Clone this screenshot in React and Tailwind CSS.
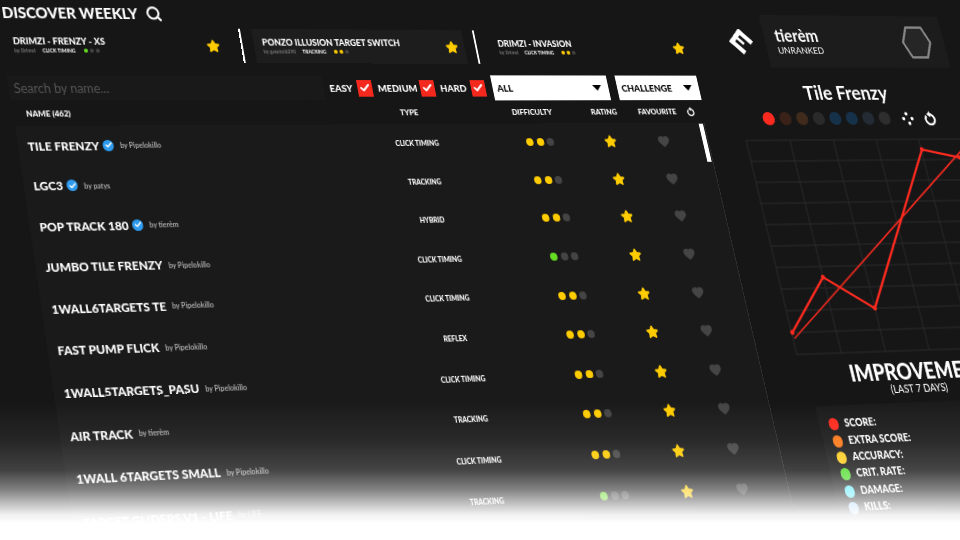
import React from 'react';
import { Search, Check, Star, Heart } from 'lucide-react';

const GOLD = 'bg-[#ffcc00]';
const GREEN = 'bg-[#66dd22]';
const OFF = 'bg-[#444444]';

const WEEKLY = [
  { title: 'DRIMZI - FRENZY - XS', by: 'by Drimzi', type: 'CLICK TIMING', level: 1, box: 'pl-[7px] pr-[10px]' },
  { title: 'PONZO ILLUSION TARGET SWITCH', by: 'by gasutol6290', type: 'TRACKING', level: 2, box: 'pl-[9px] pr-[7px] bg-[#1d1d1d]' },
  { title: 'DRIMZI - INVASION', by: 'by Drimzi', type: 'CLICK TIMING', level: 2, box: 'pl-[12px] pr-[2px]' },
];

const SCENARIOS = [
  { name: 'TILE FRENZY', verified: true, by: 'Pipelokillo', type: 'CLICK TIMING', level: 2 },
  { name: 'LGC3', verified: true, by: 'patys', type: 'TRACKING', level: 2 },
  { name: 'POP TRACK 180', verified: true, by: 'tierèm', type: 'HYBRID', level: 2 },
  { name: 'JUMBO TILE FRENZY', by: 'Pipelokillo', type: 'CLICK TIMING', level: 1 },
  { name: '1WALL6TARGETS TE', by: 'Pipelokillo', type: 'CLICK TIMING', level: 2 },
  { name: 'FAST PUMP FLICK', by: 'Pipelokillo', type: 'REFLEX', level: 2 },
  { name: '1WALL5TARGETS_PASU', by: 'Pipelokillo', type: 'CLICK TIMING', level: 2 },
  { name: 'AIR TRACK', by: 'tierèm', type: 'TRACKING', level: 2 },
  { name: '1WALL 6TARGETS SMALL', by: 'Pipelokillo', type: 'CLICK TIMING', level: 2 },
  { name: 'TARGET GLIDERS V1 - LIFE', by: 'LIFE', type: 'TRACKING', level: 1 },
];

const SWATCHES = ['bg-[#ff2a1f]', 'bg-[#3a2218]', 'bg-[#3f2a1c]', 'bg-[#2a2a2a]', 'bg-[#16314a]', 'bg-[#16314a]', 'bg-[#252b35]', 'bg-[#2e2e2e]'];

const STATS = [
  { label: 'SCORE:', color: 'bg-[#ff2a1f]' },
  { label: 'EXTRA SCORE:', color: 'bg-[#ff7a1a]' },
  { label: 'ACCURACY:', color: 'bg-[#ffcc22]' },
  { label: 'CRIT. RATE:', color: 'bg-[#55dd33]' },
  { label: 'DAMAGE:', color: 'bg-[#66eeff]' },
  { label: 'KILLS:', color: 'bg-[#99ccff]' },
];

function Dots({ level, size = 'w-[8px] h-[8px]', gap = 'gap-[3.5px]' }) {
  const on = level === 1 ? GREEN : GOLD;
  return (
    <div className={`flex items-center ${gap}`}>
      {[0, 1, 2].map((i) => (
        <span key={i} className={`rounded-full ${size} ${i < level ? on : OFF}`} />
      ))}
    </div>
  );
}

function RedCheck() {
  return (
    <span className="flex items-center justify-center w-[16px] h-[17px] bg-[#f5281d]">
      <Check className="w-[12px] h-[12px] text-white" strokeWidth={4} />
    </span>
  );
}

function Dropdown({ label, width }) {
  return (
    <div className={`flex items-center justify-between h-[26px] bg-white pl-[5px] pr-[8px] ${width}`}>
      <span className="text-[10px] font-black text-black">{label}</span>
      <span className="w-0 h-0 border-x-[5px] border-x-transparent border-t-[6px] border-t-black" />
    </div>
  );
}

function Verified() {
  return (
    <span className="flex items-center justify-center w-[11px] h-[11px] rounded-full bg-[#2e9bf0]">
      <Check className="w-[8px] h-[8px] text-white" strokeWidth={4} />
    </span>
  );
}

function ScenarioRow({ row }) {
  return (
    <div className="grid grid-cols-[362.5px_80px_168px_61px_14px] items-center h-[38.6px]">
      <div className="flex items-center">
        <span className="text-[11.7px] font-black text-white whitespace-nowrap">{row.name}</span>
        {row.verified && <span className="ml-[4px]"><Verified /></span>}
        <span className="ml-[6px] text-[7px] font-bold text-[#a8a8a8] whitespace-nowrap">by {row.by}</span>
      </div>
      <span className="text-center text-[7px] font-black text-white whitespace-nowrap">{row.type}</span>
      <div className="pl-[80px]"><Dots level={row.level} /></div>
      <Star className="w-[14px] h-[14px] fill-[#ffcc00] text-[#ffcc00]" />
      <Heart className="w-[14px] h-[14px] fill-[#454545] text-[#454545]" />
    </div>
  );
}

function Logo() {
  return (
    <svg viewBox="0 0 28 28" className="w-[28px] h-[28px]" fill="#ffffff">
      <g transform="rotate(45 14 14)">
        <rect x="4" y="4" width="5" height="20" />
        <rect x="4" y="4" width="20" height="5" />
        <rect x="4" y="19" width="20" height="5" />
        <rect x="4" y="12.5" width="14" height="3" />
      </g>
    </svg>
  );
}

function Scatter() {
  return (
    <svg viewBox="0 0 16 16" className="w-[15px] h-[15px]" fill="#ffffff">
      <circle cx="7" cy="2.5" r="2" />
      <circle cx="2.5" cy="8" r="2" />
      <circle cx="13.5" cy="8" r="2" />
      <circle cx="9" cy="13.5" r="2" />
    </svg>
  );
}

function Refresh({ className }) {
  return (
    <svg viewBox="0 0 16 16" className={className} fill="none">
      <path d="M4.1 5.6 A5.5 5.5 0 1 0 8 4" stroke="#ffffff" strokeWidth="2.4" />
      <path d="M9 0.4 L9 7.6 L4.6 4 Z" fill="#ffffff" />
    </svg>
  );
}

function Chart() {
  const cols = [0, 52, 104, 156, 208, 260, 312];
  const rows = [0, 22, 44, 66, 88, 110, 132, 154, 176, 198, 220];
  return (
    <svg viewBox="0 0 312 220" className="w-[312px] h-[220px] overflow-visible" fill="none">
      {cols.map((x) => <line key={x} x1={x} y1="0" x2={x} y2="220" stroke="#2b2b2b" strokeWidth="1" />)}
      {rows.map((y) => <line key={y} x1="0" y1={y} x2="312" y2={y} stroke="#2b2b2b" strokeWidth="1" />)}
      <path d="M2 204 L312 -28.5" stroke="#ff2a1f" strokeWidth="1.5" />
      <path d="M1 198 L52 143 L104 176 L209 11 L253 20 L312 32" stroke="#ff2a1f" strokeWidth="2.4" />
      {[[1, 198], [52, 143], [104, 176], [209, 11], [253, 20]].map(([x, y]) => (
        <circle key={x} cx={x} cy={y} r="2.4" fill="#ff2a1f" />
      ))}
    </svg>
  );
}

export default function App() {
  return (
    <div className="relative w-[960px] h-[540px] overflow-hidden bg-[#161616] font-['Lato','Liberation_Sans',sans-serif]">
      {/* whole game menu sits on one tilted plane */}
      <div className="flex w-[1320px] h-[620px] origin-top-left [transform:matrix3d(1,0.01024,0,0.000119,0.1451,1,0,-0.000128,0,0,1,0,0,0,0,1)]">
        <div className="flex flex-col w-[781px] shrink-0">
          <div className="flex items-center h-[24px]">
            <span className="text-[15px] font-black text-white whitespace-nowrap">DISCOVER WEEKLY</span>
            <Search className="ml-[8px] w-[17px] h-[17px] text-white" strokeWidth={3} />
          </div>

          <div className="flex items-center h-[35px] mt-[3px] w-[740px]">
            {WEEKLY.map((card, i) => (
              <React.Fragment key={card.title}>
                {i > 0 && <span className="w-[2px] h-[35px] mx-[12px] bg-white shrink-0" />}
                <div className={`flex items-center justify-between w-[228px] h-[35px] shrink-0 ${card.box}`}>
                  <div className="flex flex-col">
                    <span className="text-[9px] font-black leading-[11px] text-white whitespace-nowrap">{card.title}</span>
                    <div className="flex items-center text-[5px] font-bold leading-[8px] whitespace-nowrap">
                      <span className="text-[#777777]">{card.by}</span>
                      <span className="ml-[7px] text-white">{card.type}</span>
                      <span className="ml-[8px]"><Dots level={card.level} size="w-[4.5px] h-[4.5px]" gap="gap-[1.5px]" /></span>
                    </div>
                  </div>
                  <Star className="w-[14px] h-[14px] fill-[#ffcc00] text-[#ffcc00]" />
                </div>
              </React.Fragment>
            ))}
          </div>

          <div className="flex items-center h-[26px] mt-[12px] -ml-[4px] w-[745px]">
            <div className="flex items-center w-[323px] h-[24px] pl-[5px] pt-[2px] bg-[#191919]">
              <span className="text-[12.5px] text-[#555555]">Search by name...</span>
            </div>
            <span className="ml-[7px] w-[27px] text-[10px] font-black text-white">EASY</span>
            <span className="ml-[3px]"><RedCheck /></span>
            <span className="ml-[6px] w-[41px] text-[10px] font-black text-white">MEDIUM</span>
            <span className="ml-[5px]"><RedCheck /></span>
            <span className="ml-[6px] w-[28px] text-[10px] font-black text-white">HARD</span>
            <span className="ml-[6px]"><RedCheck /></span>
            <span className="ml-[8px]"><Dropdown label="ALL" width="w-[131px]" /></span>
            <span className="ml-[10px]"><Dropdown label="CHALLENGE" width="w-[95px]" /></span>
          </div>

          <div className="flex items-center h-[24px] pl-[9.5px] text-[8px] font-black text-white whitespace-nowrap">
            <span className="w-[387.5px]">NAME (462)</span>
            <span className="w-[123px]">TYPE</span>
            <span className="w-[89px]">DIFFICULTY</span>
            <span className="w-[54px]">RATING</span>
            <span className="w-[56px]">FAVOURITE</span>
            <Refresh className="w-[10px] h-[10px]" />
          </div>

          <div className="relative flex flex-col -ml-[3px] w-[740px] pl-[9.5px] bg-[#1a1a1a] border-r border-r-[#2e2e2e]">
            {SCENARIOS.map((row) => <ScenarioRow key={row.name} row={row} />)}
            <span className="absolute top-[1px] right-[1px] w-[5px] h-[40px] bg-white" />
          </div>
        </div>

        <div className="flex flex-col w-[520px] shrink-0">
          <div className="flex items-center h-[57px] mt-[8px] w-[271px]">
            <span className="ml-[8px] mr-[15px]"><Logo /></span>
            <div className="flex items-center justify-between w-[220px] h-[57px] pl-[13px] pr-[14px] bg-[#1c1c1c]">
              <div className="flex flex-col text-white">
                <span className="text-[18px] leading-[19px] font-bold">tierèm</span>
                <span className="text-[10px] leading-[13px]">UNRANKED</span>
              </div>
              <svg viewBox="0 0 40 40" className="w-[40px] h-[40px]">
                <polygon points="10.5,3.5 29.5,3.5 37,20 29.5,36.5 10.5,36.5 3,20" fill="#262626" stroke="#8a8a8a" strokeWidth="2.5" />
              </svg>
            </div>
          </div>

          <div className="w-[266px] text-center text-[21px] leading-[26px] font-bold text-white mt-[14px]">Tile Frenzy</div>

          <div className="flex items-center h-[16px] mt-[7px] w-[260px] pl-[26px]">
            {SWATCHES.map((c, i) => <span key={i} className={`w-[14px] h-[14px] rounded-full mr-[6px] ${c}`} />)}
            <span className="ml-[8px]"><Scatter /></span>
            <Refresh className="ml-[12px] w-[16px] h-[16px]" />
          </div>

          <div className="mt-[15px]"><Chart /></div>

          <div className="flex flex-col items-center w-[276px] mt-[12px] text-white">
            <span className="text-[22px] leading-[18px] font-black whitespace-nowrap">IMPROVEMENT</span>
            <span className="text-[10.5px] leading-[15px] mt-[1px] font-normal pr-[10px]">(LAST 7 DAYS)</span>
          </div>

          <div className="flex flex-col ml-[7px] mt-[6px] w-[270px] pt-[10px] pl-[11px] bg-[#1b1b1b]">
            {STATS.map((s) => (
              <div key={s.label} className="flex items-center h-[16.4px]">
                <span className={`w-[11px] h-[12px] rounded-full ${s.color}`} />
                <span className="ml-[7px] text-[10.5px] font-black text-white whitespace-nowrap">{s.label}</span>
              </div>
            ))}
          </div>
        </div>
      </div>

      <div className="absolute inset-x-0 bottom-0 h-[140px] pointer-events-none bg-[linear-gradient(to_bottom,rgba(255,255,255,0)_0%,rgba(255,255,255,0.07)_29%,rgba(255,255,255,0.19)_50%,rgba(255,255,255,0.46)_64%,rgba(255,255,255,0.76)_75%,rgba(255,255,255,0.94)_82%,rgba(255,255,255,1)_88%)]" />
    </div>
  );
}
